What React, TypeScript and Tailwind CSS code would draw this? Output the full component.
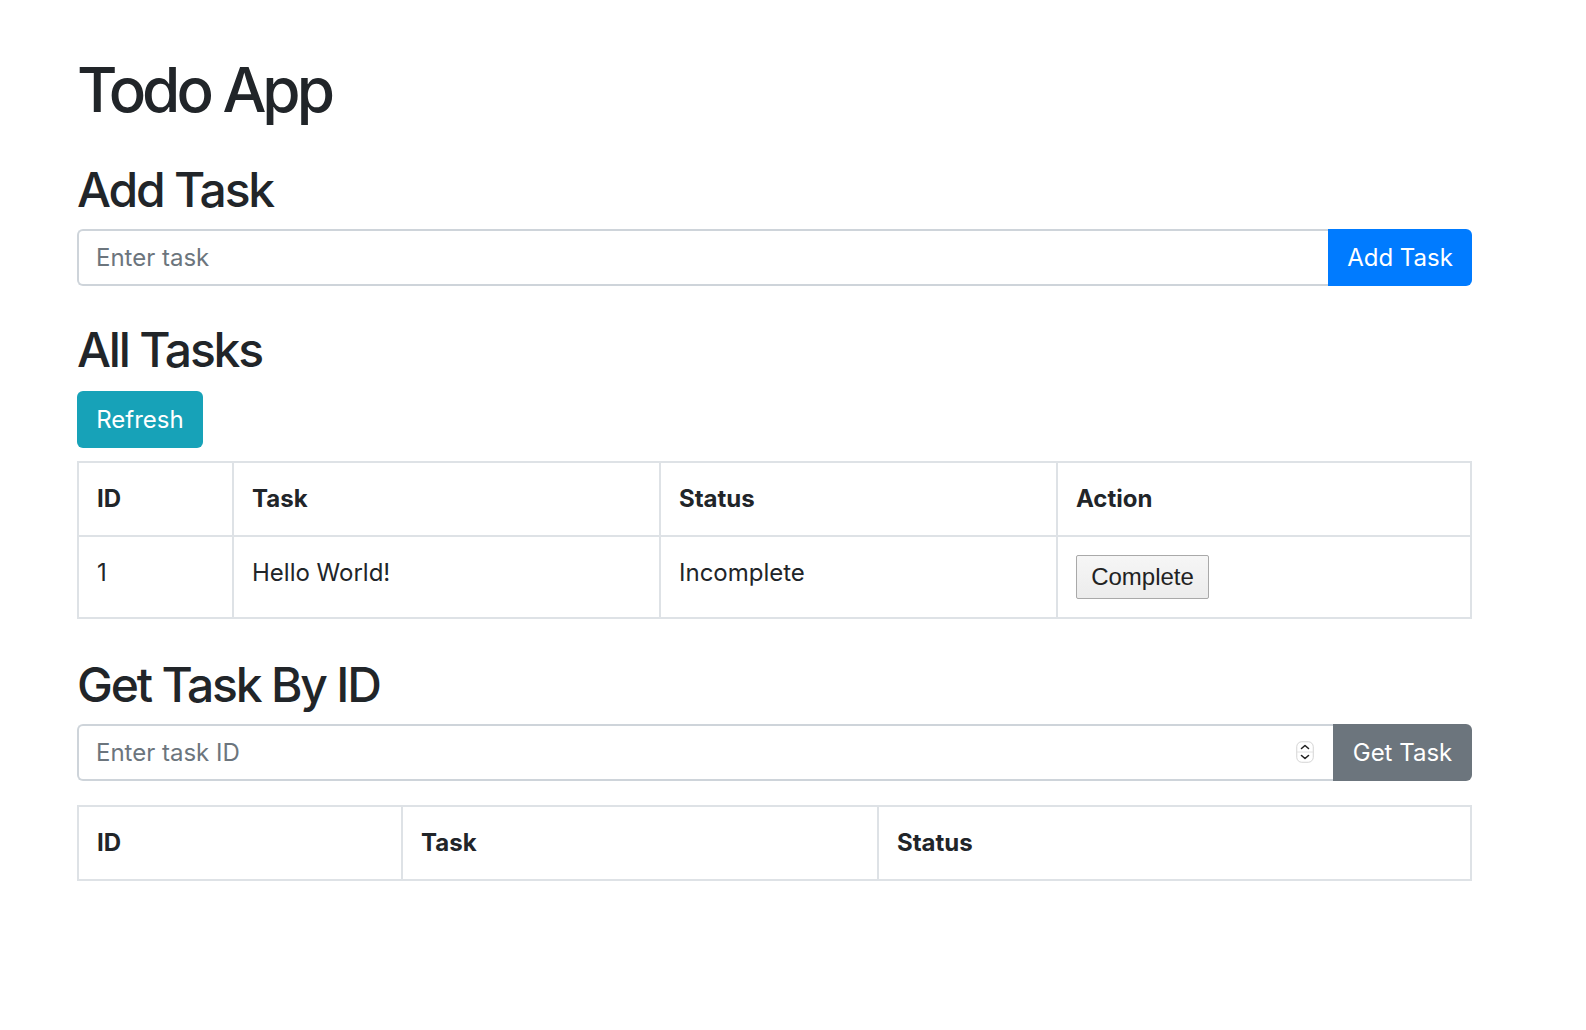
import { useState } from "react";

interface Task {
  id: number;
  task: string;
  status: string;
}

function Spinner() {
  return (
    <svg width="18" height="22" viewBox="0 0 18 22" className="absolute right-[158px] top-[17px]">
      <rect x="0.75" y="0.75" width="16.5" height="20.5" rx="5" fill="#fff" stroke="#d4d4d4" strokeWidth="1" />
      <line x1="1" y1="11" x2="17" y2="11" stroke="#e2e2e2" strokeWidth="1" />
      <path d="M5.5 7.5 L9 4.5 L12.5 7.5" fill="none" stroke="#222" strokeWidth="1.6" strokeLinecap="round" strokeLinejoin="round" />
      <path d="M5.5 14.5 L9 17.5 L12.5 14.5" fill="none" stroke="#222" strokeWidth="1.6" strokeLinecap="round" strokeLinejoin="round" />
    </svg>
  );
}

export default function App() {
  const [tasks] = useState<Task[]>([{ id: 1, task: "Hello World!", status: "Incomplete" }]);
  const [text, setText] = useState("");
  const [taskId, setTaskId] = useState("");

  const th = "border-2 border-[#dee2e6] px-[18px] py-[18px] text-left font-bold leading-[36px] align-top";
  const td = "border-2 border-[#dee2e6] px-[18px] py-[18px] leading-[36px] align-top";
  const h2 = "text-[48px] leading-[58px] font-medium tracking-[-2.2px]";

  return (
    <div
      className="min-h-[1030px] bg-white text-[#212529] text-[24px]"
      style={{ fontFamily: "Inter, 'Noto Sans', sans-serif" }}
    >
      <div className="ml-[77px] w-[1395px] pt-[53px]">
        <h1 className="text-[62px] leading-[74px] font-medium tracking-[-4px]">Todo App</h1>

        <h2 className={`mt-[34px] ${h2}`}>Add Task</h2>
        <div className="mt-[10px] flex h-[57px]">
          <input
            value={text}
            onChange={(e) => setText(e.target.value)}
            placeholder="Enter task"
            className="flex-1 rounded-l-[6px] border-2 border-r-0 border-[#ced4da] px-[17px] text-[24px] outline-none placeholder:text-[#6c757d]"
          />
          <button className="w-[144px] rounded-r-[6px] bg-[#007bff] text-[24px] text-white">Add Task</button>
        </div>

        <h2 className={`mt-[35px] ${h2}`}>All Tasks</h2>
        <button className="mt-[12px] h-[57px] w-[126px] rounded-[6px] bg-[#17a2b8] text-[24px] text-white">
          Refresh
        </button>

        <table className="mt-[13px] w-full border-collapse">
          <thead>
            <tr>
              <th className={`${th} w-[155px]`}>ID</th>
              <th className={`${th} w-[427px]`}>Task</th>
              <th className={`${th} w-[397px]`}>Status</th>
              <th className={th}>Action</th>
            </tr>
          </thead>
          <tbody>
            {tasks.map((t) => (
              <tr key={t.id}>
                <td className={td}>{t.id}</td>
                <td className={td}>{t.task}</td>
                <td className={td}>{t.status}</td>
                <td className={td}>
                  <button
                    className="h-[44px] w-[133px] rounded-[2px] border border-[#a9a9a9] bg-gradient-to-b from-[#f6f6f6] to-[#ececec] text-[24px] leading-none text-[#222]"
                    style={{ fontFamily: "'Liberation Sans', Arial, sans-serif" }}
                  >
                    Complete
                  </button>
                </td>
              </tr>
            ))}
          </tbody>
        </table>

        <h2 className={`mt-[37px] ${h2}`}>Get Task By ID</h2>
        <div className="relative mt-[10px] flex h-[57px]">
          <input
            value={taskId}
            onChange={(e) => setTaskId(e.target.value)}
            placeholder="Enter task ID"
            className="flex-1 rounded-l-[6px] border-2 border-r-0 border-[#ced4da] px-[17px] text-[24px] outline-none placeholder:text-[#6c757d]"
          />
          <Spinner />
          <button className="w-[139px] rounded-r-[6px] bg-[#6c757d] text-[24px] text-white">Get Task</button>
        </div>

        <table className="mt-[24px] w-full border-collapse">
          <thead>
            <tr>
              <th className={`${th} w-[324px]`}>ID</th>
              <th className={`${th} w-[476px]`}>Task</th>
              <th className={th}>Status</th>
            </tr>
          </thead>
        </table>
      </div>
    </div>
  );
}
